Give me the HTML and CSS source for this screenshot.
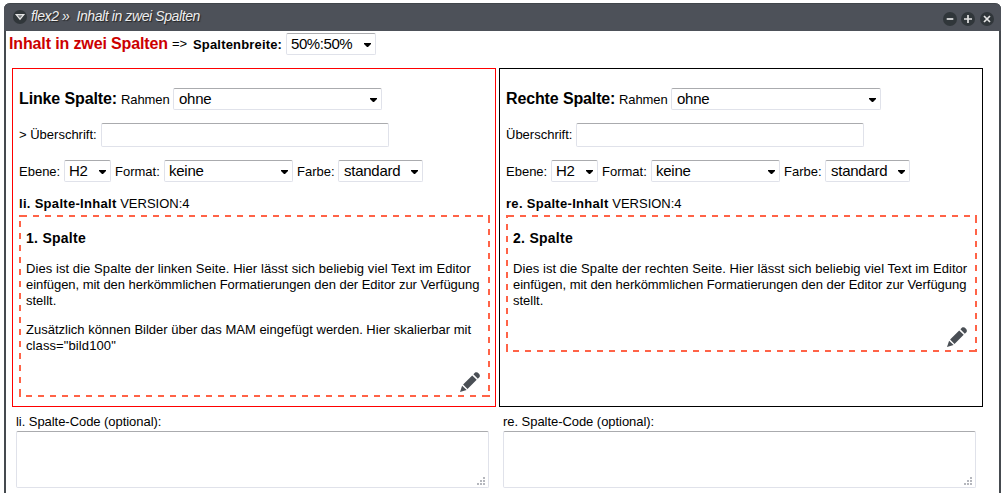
FILE: index.html
```html
<!DOCTYPE html>
<html lang="de">
<head>
<meta charset="utf-8">
<title>Inhalt in zwei Spalten</title>
<link rel="stylesheet" href="styles.css">
</head>
<body>
<main class="window">
  <header class="titlebar">
    <svg class="round" viewBox="0 0 14 14"><circle cx="7" cy="7" r="7"/><path d="M3.2 4.7h7.6L7 9.2z" fill="#777b7e" stroke="#e4e4e4" stroke-width="1.2"/></svg>
    <span class="title">flex2 »&nbsp; Inhalt in zwei Spalten</span>
    <span class="actions">
      <svg class="round" viewBox="0 0 14 14"><circle cx="7" cy="7" r="7"/><path d="M3.7 7h6.6" class="mark"/></svg>
      <svg class="round" viewBox="0 0 14 14"><circle cx="7" cy="7" r="7"/><path d="M3 7h8M7 3v8" class="mark"/></svg>
      <svg class="round last" viewBox="0 0 14 14"><circle cx="7" cy="7" r="7"/><path d="M4 4l6 6M10 4l-6 6" class="mark"/></svg>
    </span>
  </header>
  <div class="intro">
    <h1>Inhalt in zwei Spalten</h1><span class="arrow">=&gt;</span><b class="width-label">Spaltenbreite:</b>
    <span class="select w90">50%:50%</span>
  </div>
  <div class="columns">
    <section class="column">
      <div class="box red">
        <div class="row first"><h2 class="left-head">Linke Spalte:</h2><span class="rahmen">Rahmen</span><span class="select w209">ohne</span></div>
        <div class="row second"><span class="ueber wide">&gt; Überschrift:</span><span class="field input"></span></div>
        <div class="row third"><span class="ebene">Ebene:</span><span class="select w47">H2</span><span class="format">Format:</span><span class="select w129">keine</span><span class="farbe">Farbe:</span><span class="select w85">standard</span></div>
        <div class="version"><b class="part">li. Spalte-Inhalt</b> VERSION:4</div>
        <article class="content tall">
          <h3>1. Spalte</h3>
          <p><span class="l1">Dies ist die Spalte der linken Seite. Hier lässt sich beliebig viel Text im Editor</span><br><span class="l2">einfügen, mit den herkömmlichen Formatierungen den der Editor zur Verfügung</span><br>stellt.</p>
          <p>Zusätzlich können Bilder über das MAM eingefügt werden. Hier skalierbar mit<br><span class="l4">class="bild100"</span></p>
          <svg class="pencil" viewBox="0 0 20 20"><path d="M0 20l2.1-6.3 4.5 4.2zM3.1 12.4l9.1-9 4.5 4.4-9.2 9.1zM13.4 2.3l1.7-1.7c2-1.7 5.9 1.9 4.5 4.4l-1.8 1.7z"/></svg>
        </article>
      </div>
      <label class="code-label">li. Spalte-Code (optional):</label>
      <div class="field area"><svg class="grip" viewBox="0 0 8 8"><path d="M6 0h2v2H6zM3 3h2v2H3zM6 3h2v2H6zM0 6h2v2H0zM3 6h2v2H3zM6 6h2v2H6z"/></svg></div>
    </section>
    <section class="column">
      <div class="box">
        <div class="row first"><h2 class="right-head">Rechte Spalte:</h2><span class="rahmen">Rahmen</span><span class="select w210">ohne</span></div>
        <div class="row second"><span class="ueber">Überschrift:</span><span class="field input"></span></div>
        <div class="row third"><span class="ebene">Ebene:</span><span class="select w47">H2</span><span class="format">Format:</span><span class="select w129">keine</span><span class="farbe">Farbe:</span><span class="select w85">standard</span></div>
        <div class="version"><b class="part">re. Spalte-Inhalt</b> VERSION:4</div>
        <article class="content short">
          <h3>2. Spalte</h3>
          <p><span class="l1">Dies ist die Spalte der rechten Seite. Hier lässt sich beliebig viel Text im Editor</span><br><span class="l2">einfügen, mit den herkömmlichen Formatierungen den der Editor zur Verfügung</span><br>stellt.</p>
          <svg class="pencil" viewBox="0 0 20 20"><path d="M0 20l2.1-6.3 4.5 4.2zM3.1 12.4l9.1-9 4.5 4.4-9.2 9.1zM13.4 2.3l1.7-1.7c2-1.7 5.9 1.9 4.5 4.4l-1.8 1.7z"/></svg>
        </article>
      </div>
      <label class="code-label">re. Spalte-Code (optional):</label>
      <div class="field area"><svg class="grip" viewBox="0 0 8 8"><path d="M6 0h2v2H6zM3 3h2v2H3zM6 3h2v2H6zM0 6h2v2H0zM3 6h2v2H3zM6 6h2v2H6z"/></svg></div>
    </section>
  </div>
</main>
</body>
</html>
```
FILE: styles.css
```css
* { box-sizing: border-box; }
body { margin: 0; padding: 3px 3px 0 4px; height: 493px; overflow: hidden; background: #fff; color: #000; font: 13px/16px "Liberation Sans", Arial, sans-serif; }
h1, h2, h3, p { margin: 0; }
.window { height: 500px; border: 2px solid #454a4f; border-width: 0 2px; border-radius: 6px 6px 0 0; }
.titlebar { display: flex; align-items: center; height: 28px; margin: 0 -2px; padding: 0 7px 2px 9px; background: #4d5159; border-top: 1px solid #41464b; border-radius: 6px 6px 0 0; color: #eee; font-style: italic; text-shadow: 1px 1px 1px #222; }
.round { width: 14px; height: 14px; flex: none; fill: #30363a; }
.mark { stroke: #e4e4e4; stroke-width: 1.7; fill: none; }
.title { margin: -2px 0 0 4px; font-size: 14px; letter-spacing: -0.4px; white-space: nowrap; }
.actions { display: flex; gap: 4px; margin: 4px 0 0 auto; }
.last { margin-left: 1px; }
.intro { display: flex; align-items: center; height: 22px; margin: 2px 0 0 3px; white-space: nowrap; }
h1 { width: 163px; font-size: 16px; line-height: 18px; letter-spacing: -0.13px; color: #c00; }
.arrow { width: 21px; }
.width-label { width: 93px; padding-top: 1px; letter-spacing: 0.17px; }
.select { position: relative; flex: none; display: block; height: 22px; padding: 1px 4px; border: 1px solid #e0e2ea; border-top-color: #aaabae; border-radius: 2px; font-size: 15px; line-height: 17px; letter-spacing: -0.25px; white-space: nowrap; }
.select::after { content: ""; position: absolute; right: 4px; top: 9px; width: 7px; height: 4px; background: #000; clip-path: polygon(0 0, 100% 0, 100% 25%, 57% 100%, 43% 100%, 0 25%); }
.w90 { width: 90px; letter-spacing: -0.42px; }
.w209 { width: 209px; padding-left: 5px; }
.w210 { width: 210px; padding-left: 5px; }
.w47 { width: 47px; }
.w129 { width: 129px; }
.w85 { width: 85px; padding-left: 5px; }
.columns { display: flex; gap: 3px; margin: 13px 0 0 6px; }
.column { width: 484px; }
.box { height: 339px; padding: 19px 5px 0 6px; border: 1px solid #000; }
.red { border-color: #f00; }
.row { display: flex; align-items: center; white-space: nowrap; }
.first { height: 22px; }
.second { height: 24px; margin-top: 13px; }
.third { height: 22px; margin-top: 13px; }
h2 { font-size: 16px; line-height: 18px; letter-spacing: -0.13px; }
.left-head { width: 102px; }
.right-head { width: 113px; }
.rahmen { width: 52px; padding-top: 1px; letter-spacing: -0.1px; }
.ueber { width: 70px; }
.ueber.wide { width: 82px; }
.field { border: 1px solid #e0e2ea; border-top-color: #aaabae; border-radius: 2px; }
.input { width: 288px; height: 24px; }
.ebene { width: 45px; padding-top: 1px; }
.format { width: 53px; padding: 1px 0 0 4px; }
.farbe { width: 45px; padding: 1px 0 0 4px; }
.version { padding-top: 14px; height: 33px; white-space: nowrap; }
.part { letter-spacing: 0.3px; }
/* Dashes run clockwise on a 12px rhythm, starting 2px after each corner. */
.content { position: relative; width: 471px; padding: 15px 0 0 7px; white-space: nowrap;
  background:
    linear-gradient(tomato, tomato) 0 0 / 2px 2px no-repeat,
    linear-gradient(tomato, tomato) 100% 0 / 2px 2px no-repeat,
    linear-gradient(tomato, tomato) 100% 100% / 2px 2px no-repeat,
    linear-gradient(tomato, tomato) 0 100% / 2px 2px no-repeat,
    linear-gradient(90deg, tomato 6px, transparent 0) 2px 0 / 12px 2px repeat-x,
    linear-gradient(270deg, tomato 6px, transparent 0) right 2px bottom 0 / 12px 2px repeat-x,
    linear-gradient(0deg, tomato 6px, transparent 0) left 0 bottom 2px / 2px 12px repeat-y,
    linear-gradient(180deg, tomato 6px, transparent 0) right 0 top 2px / 2px 12px repeat-y; }
.tall { height: 182px; }
.short { height: 137px; }
h3 { font-size: 14px; line-height: 16px; margin-bottom: 15px; letter-spacing: 0.27px; }
.content p { margin-bottom: 13px; }
.l1 { letter-spacing: 0.07px; }
.l2 { letter-spacing: -0.045px; }
.l4 { letter-spacing: 0.1px; }
.pencil { position: absolute; right: 10px; bottom: 5px; width: 20px; height: 20px; fill: #4a4f55; }
.code-label { display: block; height: 24px; padding: 7px 0 0 4px; letter-spacing: -0.05px; }
.area { display: flex; width: 473px; height: 57px; margin-left: 4px; padding: 0 3px 2px 0; align-items: flex-end; justify-content: flex-end; }
.grip { width: 8px; height: 8px; fill: #b5b7bd; }
```
